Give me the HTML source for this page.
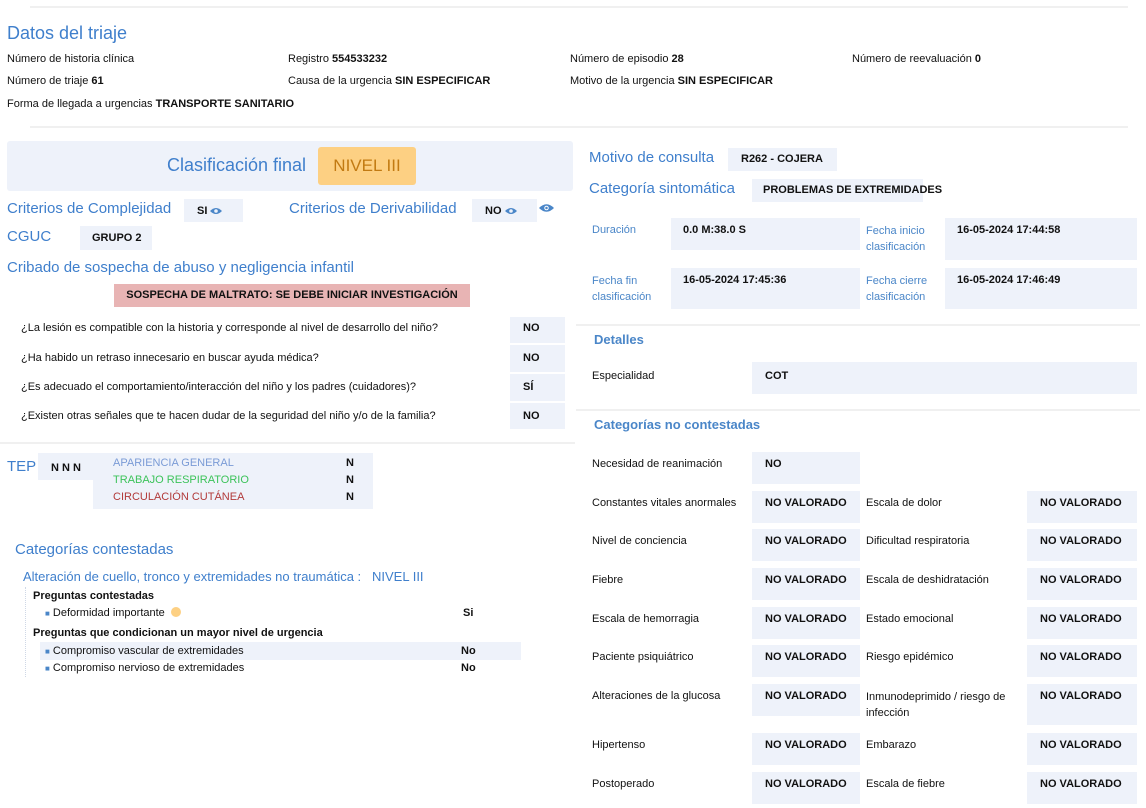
<!DOCTYPE html>
<html><head><meta charset="utf-8"><style>
*{margin:0;padding:0;box-sizing:border-box}
body{width:1146px;height:808px;background:#fff;position:relative;overflow:hidden;font-family:"Liberation Sans",Arial,sans-serif;color:#111;font-size:11px}
.a{position:absolute;white-space:nowrap}
.t{position:absolute;white-space:nowrap;line-height:14px}
.h{color:#3f7fcc}
.bx{position:absolute;background:#eef2fa}
.ln{position:absolute;height:2px;background:#f0f0f0}
b{font-weight:bold}
.eye{display:inline-block;vertical-align:middle;margin-left:3px}
</style></head><body>
<div class="ln" style="left:30px;top:6px;width:1098px"></div>
<div class="a h" style="left:7px;top:22px;font-size:18px;line-height:22px">Datos del triaje</div>
<div class="t" style="left:7px;top:52px">Número de historia clínica</div>
<div class="t" style="left:288px;top:52px">Registro <b>554533232</b></div>
<div class="t" style="left:570px;top:52px">Número de episodio <b>28</b></div>
<div class="t" style="left:852px;top:52px">Número de reevaluación <b>0</b></div>
<div class="t" style="left:7px;top:74px">Número de triaje <b>61</b></div>
<div class="t" style="left:288px;top:74px">Causa de la urgencia <b>SIN ESPECIFICAR</b></div>
<div class="t" style="left:570px;top:74px">Motivo de la urgencia <b>SIN ESPECIFICAR</b></div>
<div class="t" style="left:7px;top:97px">Forma de llegada a urgencias <b>TRANSPORTE SANITARIO</b></div>
<div class="ln" style="left:30px;top:126px;width:1098px"></div>

<div class="bx" style="left:7px;top:141px;width:566px;height:50px;border-radius:3px"></div>
<div class="a h" style="left:167px;top:154px;font-size:18px;line-height:22px">Clasificación final</div>
<div class="a" style="left:318px;top:147px;width:98px;height:38px;background:#fdd083;border-radius:3px;color:#c27a12;font-size:17px;line-height:38px;text-align:center">NIVEL III</div>

<div class="a h" style="left:7px;top:200px;font-size:15px;line-height:18px">Criterios de Complejidad</div>
<div class="bx" style="left:184px;top:199px;width:59px;height:23px"></div>
<div class="t" style="left:197px;top:204px;font-weight:bold">SI<svg class="eye" width="12" height="8" viewBox="0 0 12 8"><path d="M0 4Q6-2 12 4Q6 10 0 4Z" fill="#4a86c8"/><circle cx="6" cy="4" r="1.8" fill="#eef2fa"/></svg></div>
<div class="a h" style="left:289px;top:200px;font-size:15px;line-height:18px">Criterios de Derivabilidad</div>
<div class="bx" style="left:472px;top:199px;width:65px;height:23px"></div>
<div class="t" style="left:485px;top:204px;font-weight:bold">NO<svg class="eye" width="12" height="8" viewBox="0 0 12 8"><path d="M0 4Q6-2 12 4Q6 10 0 4Z" fill="#4a86c8"/><circle cx="6" cy="4" r="1.8" fill="#eef2fa"/></svg></div>
<svg class="a" style="left:539px;top:203px" width="15" height="10" viewBox="0 0 12 8"><path d="M0 4Q6-2 12 4Q6 10 0 4Z" fill="#4a86c8"/><circle cx="6" cy="4" r="1.8" fill="#fff"/><circle cx="6" cy="4" r="1" fill="#4a86c8"/></svg>
<div class="a h" style="left:7px;top:228px;font-size:15px;line-height:18px">CGUC</div>
<div class="bx" style="left:80px;top:226px;width:72px;height:24px"></div>
<div class="t" style="left:92px;top:231px;font-weight:bold">GRUPO 2</div>
<div class="a h" style="left:7px;top:259px;font-size:15px;line-height:18px">Cribado de sospecha de abuso y negligencia infantil</div>
<div class="a" style="left:114px;top:284px;width:356px;height:23px;background:#e8b4b4;font-weight:bold;line-height:23px;text-align:center">SOSPECHA DE MALTRATO: SE DEBE INICIAR INVESTIGACIÓN</div>

<div class="t" style="left:21px;top:321px">¿La lesión es compatible con la historia y corresponde al nivel de desarrollo del niño?</div>
<div class="t" style="left:21px;top:351px">¿Ha habido un retraso innecesario en buscar ayuda médica?</div>
<div class="t" style="left:21px;top:380px">¿Es adecuado el comportamiento/interacción del niño y los padres (cuidadores)?</div>
<div class="t" style="left:21px;top:409px">¿Existen otras señales que te hacen dudar de la seguridad del niño y/o de la familia?</div>
<div class="bx" style="left:510px;top:317px;width:55px;height:26px"></div>
<div class="bx" style="left:510px;top:345px;width:55px;height:27px"></div>
<div class="bx" style="left:510px;top:374px;width:55px;height:27px"></div>
<div class="bx" style="left:510px;top:403px;width:55px;height:26px"></div>
<div class="t" style="left:523px;top:321px;font-weight:bold">NO</div>
<div class="t" style="left:523px;top:351px;font-weight:bold">NO</div>
<div class="t" style="left:523px;top:380px;font-weight:bold">SÍ</div>
<div class="t" style="left:523px;top:409px;font-weight:bold">NO</div>
<div class="ln" style="left:0;top:442px;width:575px"></div>

<div class="a h" style="left:7px;top:458px;font-size:15px;line-height:18px">TEP</div>
<div class="bx" style="left:38px;top:453px;width:56px;height:27px"></div>
<div class="t" style="left:51px;top:461px;font-weight:bold">N N N</div>
<div class="bx" style="left:93px;top:453px;width:280px;height:56px"></div>
<div class="t" style="left:113px;top:456px;color:#7a9bd6">APARIENCIA GENERAL</div>
<div class="t" style="left:113px;top:473px;color:#3cc35a">TRABAJO RESPIRATORIO</div>
<div class="t" style="left:113px;top:490px;color:#b23a3a">CIRCULACIÓN CUTÁNEA</div>
<div class="t" style="left:346px;top:456px;font-weight:bold">N</div>
<div class="t" style="left:346px;top:473px;font-weight:bold">N</div>
<div class="t" style="left:346px;top:490px;font-weight:bold">N</div>

<div class="a h" style="left:15px;top:541px;font-size:15px;line-height:18px">Categorías contestadas</div>
<div class="a h" style="left:23px;top:569px;font-size:13px;line-height:16px">Alteración de cuello, tronco y extremidades no traumática :&nbsp;&nbsp;&nbsp;NIVEL III</div>
<div class="a" style="left:25px;top:587px;height:90px;border-left:1px dotted #cfd8e6"></div>
<div class="t" style="left:33px;top:589px;font-weight:bold">Preguntas contestadas</div>
<div class="t" style="left:45px;top:606px"><span style="color:#4a86c8;font-size:8px">■</span> Deformidad importante <span style="display:inline-block;width:10px;height:10px;border-radius:50%;background:#fdd083;vertical-align:-1px;margin-left:3px"></span></div>
<div class="t" style="left:463px;top:606px;font-weight:bold">Si</div>
<div class="t" style="left:33px;top:626px;font-weight:bold">Preguntas que condicionan un mayor nivel de urgencia</div>
<div class="bx" style="left:40px;top:642px;width:481px;height:18px"></div>
<div class="t" style="left:45px;top:644px"><span style="color:#4a86c8;font-size:8px">■</span> Compromiso vascular de extremidades</div>
<div class="t" style="left:461px;top:644px;font-weight:bold">No</div>
<div class="t" style="left:45px;top:661px"><span style="color:#4a86c8;font-size:8px">■</span> Compromiso nervioso de extremidades</div>
<div class="t" style="left:461px;top:661px;font-weight:bold">No</div>

<!-- right -->
<div class="a h" style="left:589px;top:149px;font-size:15px;line-height:18px">Motivo de consulta</div>
<div class="bx" style="left:728px;top:148px;width:109px;height:23px"></div>
<div class="t" style="left:741px;top:152px;font-weight:bold">R262 - COJERA</div>
<div class="a h" style="left:589px;top:180px;font-size:15px;line-height:18px">Categoría sintomática</div>
<div class="bx" style="left:752px;top:179px;width:171px;height:23px"></div>
<div class="t" style="left:763px;top:183px;font-weight:bold">PROBLEMAS DE EXTREMIDADES</div>

<div class="t" style="left:592px;top:223px;color:#4a86c8">Duración</div>
<div class="bx" style="left:671px;top:218px;width:189px;height:32px"></div>
<div class="t" style="left:683px;top:223px;font-weight:bold">0.0 M:38.0 S</div>
<div class="t" style="left:866px;top:223px;color:#4a86c8;line-height:16px">Fecha inicio<br>clasificación</div>
<div class="bx" style="left:945px;top:218px;width:192px;height:42px"></div>
<div class="t" style="left:957px;top:223px;font-weight:bold">16-05-2024 17:44:58</div>
<div class="t" style="left:592px;top:273px;color:#4a86c8;line-height:16px">Fecha fin<br>clasificación</div>
<div class="bx" style="left:671px;top:268px;width:189px;height:41px"></div>
<div class="t" style="left:683px;top:273px;font-weight:bold">16-05-2024 17:45:36</div>
<div class="t" style="left:866px;top:273px;color:#4a86c8;line-height:16px">Fecha cierre<br>clasificación</div>
<div class="bx" style="left:945px;top:268px;width:192px;height:41px"></div>
<div class="t" style="left:957px;top:273px;font-weight:bold">16-05-2024 17:46:49</div>
<div class="ln" style="left:576px;top:324px;width:564px"></div>
<div class="a h" style="left:594px;top:332px;font-size:13px;line-height:16px;font-weight:bold;color:#4a86c8">Detalles</div>
<div class="t" style="left:592px;top:369px">Especialidad</div>
<div class="bx" style="left:752px;top:362px;width:385px;height:32px"></div>
<div class="t" style="left:765px;top:369px;font-weight:bold">COT</div>
<div class="ln" style="left:576px;top:409px;width:564px"></div>
<div class="a h" style="left:594px;top:417px;font-size:13px;line-height:16px;font-weight:bold;color:#4a86c8">Categorías no contestadas</div>

<div class="bx" style="left:752px;top:452px;width:108px;height:32px"></div>
<div class="t" style="left:592px;top:457px">Necesidad de reanimación</div>
<div class="t" style="left:765px;top:457px;font-weight:bold">NO</div>

<div class="bx" style="left:752px;top:491px;width:108px;height:32px"></div><div class="bx" style="left:1027px;top:491px;width:110px;height:32px"></div>
<div class="t" style="left:592px;top:496px">Constantes vitales anormales</div><div class="t" style="left:765px;top:496px;font-weight:bold">NO VALORADO</div><div class="t" style="left:866px;top:496px">Escala de dolor</div><div class="t" style="left:1040px;top:496px;font-weight:bold">NO VALORADO</div>

<div class="bx" style="left:752px;top:529px;width:108px;height:32px"></div><div class="bx" style="left:1027px;top:529px;width:110px;height:32px"></div>
<div class="t" style="left:592px;top:534px">Nivel de conciencia</div><div class="t" style="left:765px;top:534px;font-weight:bold">NO VALORADO</div><div class="t" style="left:866px;top:534px">Dificultad respiratoria</div><div class="t" style="left:1040px;top:534px;font-weight:bold">NO VALORADO</div>

<div class="bx" style="left:752px;top:568px;width:108px;height:32px"></div><div class="bx" style="left:1027px;top:568px;width:110px;height:32px"></div>
<div class="t" style="left:592px;top:573px">Fiebre</div><div class="t" style="left:765px;top:573px;font-weight:bold">NO VALORADO</div><div class="t" style="left:866px;top:573px">Escala de deshidratación</div><div class="t" style="left:1040px;top:573px;font-weight:bold">NO VALORADO</div>

<div class="bx" style="left:752px;top:607px;width:108px;height:32px"></div><div class="bx" style="left:1027px;top:607px;width:110px;height:32px"></div>
<div class="t" style="left:592px;top:612px">Escala de hemorragia</div><div class="t" style="left:765px;top:612px;font-weight:bold">NO VALORADO</div><div class="t" style="left:866px;top:612px">Estado emocional</div><div class="t" style="left:1040px;top:612px;font-weight:bold">NO VALORADO</div>

<div class="bx" style="left:752px;top:645px;width:108px;height:32px"></div><div class="bx" style="left:1027px;top:645px;width:110px;height:32px"></div>
<div class="t" style="left:592px;top:650px">Paciente psiquiátrico</div><div class="t" style="left:765px;top:650px;font-weight:bold">NO VALORADO</div><div class="t" style="left:866px;top:650px">Riesgo epidémico</div><div class="t" style="left:1040px;top:650px;font-weight:bold">NO VALORADO</div>

<div class="bx" style="left:752px;top:684px;width:108px;height:32px"></div><div class="bx" style="left:1027px;top:684px;width:110px;height:41px"></div>
<div class="t" style="left:592px;top:689px">Alteraciones de la glucosa</div><div class="t" style="left:765px;top:689px;font-weight:bold">NO VALORADO</div><div class="t" style="left:866px;top:689px;line-height:16px">Inmunodeprimido / riesgo de<br>infección</div><div class="t" style="left:1040px;top:689px;font-weight:bold">NO VALORADO</div>

<div class="bx" style="left:752px;top:733px;width:108px;height:32px"></div><div class="bx" style="left:1027px;top:733px;width:110px;height:32px"></div>
<div class="t" style="left:592px;top:738px">Hipertenso</div><div class="t" style="left:765px;top:738px;font-weight:bold">NO VALORADO</div><div class="t" style="left:866px;top:738px">Embarazo</div><div class="t" style="left:1040px;top:738px;font-weight:bold">NO VALORADO</div>

<div class="bx" style="left:752px;top:772px;width:108px;height:32px"></div><div class="bx" style="left:1027px;top:772px;width:110px;height:32px"></div>
<div class="t" style="left:592px;top:777px">Postoperado</div><div class="t" style="left:765px;top:777px;font-weight:bold">NO VALORADO</div><div class="t" style="left:866px;top:777px">Escala de fiebre</div><div class="t" style="left:1040px;top:777px;font-weight:bold">NO VALORADO</div>
</body></html>
